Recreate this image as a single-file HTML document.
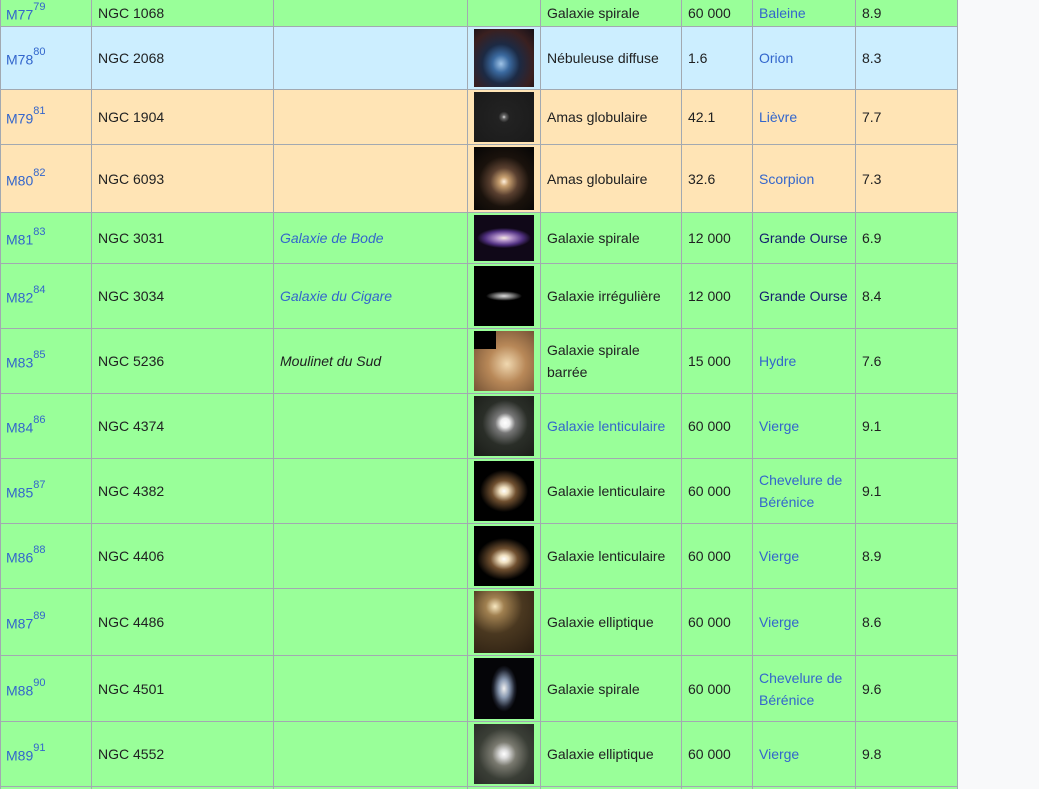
<!DOCTYPE html>
<html><head><meta charset="utf-8"><style>
html,body{margin:0;width:1039px;height:789px;overflow:hidden}
body{background:#f8f9fa;font-family:"Liberation Sans",Arial,sans-serif;font-size:14px;color:#202122;position:relative}
.r{position:absolute;left:0;width:958px;box-sizing:border-box;border-bottom:1px solid #a2a9b1;border-left:1px solid #a2a9b1}
.g{background:#99ff99}.b{background:#cceeff}.o{background:#ffe4b5}
.c{position:absolute;top:0;bottom:0;box-sizing:border-box;border-right:1px solid #a2a9b1;padding:0 6px;display:flex;align-items:center;line-height:22px}
.c1{left:-1px;width:92px}.c2{left:91px;width:182px}.c3{left:273px;width:194px}.c4{left:467px;width:73px}.c5{left:540px;width:141px}.c6{left:681px;width:71px}.c7{left:752px;width:103px}.c8{left:855px;width:102px}
a{color:#3366cc;text-decoration:none}
sup{font-size:11px;position:relative;top:-4px}
i{font-style:italic}
.im{position:absolute;left:6px;width:60px;top:2px;bottom:2px}
.dk{color:#14206e}
</style></head><body>

<div class="r g" style="top:0px;height:27px"><div class="c c1"><a>M77<sup>79</sup></a></div><div class="c c2">NGC 1068</div><div class="c c3"></div><div class="c c4"></div><div class="c c5">Galaxie spirale</div><div class="c c6">60 000</div><div class="c c7"><a>Baleine</a></div><div class="c c8">8.9</div></div>

<div class="r b" style="top:27px;height:63px"><div class="c c1"><a>M78<sup>80</sup></a></div><div class="c c2">NGC 2068</div><div class="c c3"></div><div class="c c4"><div class="im" style="background:radial-gradient(ellipse at 45% 60%,#9fc4e8 0,#3b6aa0 18%,#1c2a44 40%,#3a2020 70%,#141018 100%)"></div></div><div class="c c5">Nébuleuse diffuse</div><div class="c c6">1.6</div><div class="c c7"><a>Orion</a></div><div class="c c8">8.3</div></div>

<div class="r o" style="top:90px;height:55px"><div class="c c1"><a>M79<sup>81</sup></a></div><div class="c c2">NGC 1904</div><div class="c c3"></div><div class="c c4"><div class="im" style="background:radial-gradient(circle at 50% 50%,#ddd 0,#666 5%,#222 14%,#1a1a1a 100%)"></div></div><div class="c c5">Amas globulaire</div><div class="c c6">42.1</div><div class="c c7"><a>Lièvre</a></div><div class="c c8">7.7</div></div>

<div class="r o" style="top:145px;height:68px"><div class="c c1"><a>M80<sup>82</sup></a></div><div class="c c2">NGC 6093</div><div class="c c3"></div><div class="c c4"><div class="im" style="background:radial-gradient(circle at 50% 55%,#fff0dd 0,#c8a070 10%,#5a4030 30%,#1a120c 55%,#050505 100%)"></div></div><div class="c c5">Amas globulaire</div><div class="c c6">32.6</div><div class="c c7"><a>Scorpion</a></div><div class="c c8">7.3</div></div>

<div class="r g" style="top:213px;height:51px"><div class="c c1"><a>M81<sup>83</sup></a></div><div class="c c2">NGC 3031</div><div class="c c3"><a><i>Galaxie de Bode</i></a></div><div class="c c4"><div class="im" style="background:radial-gradient(ellipse 45% 22% at 50% 50%,#f4e8e0 0,#b090c8 30%,#503080 70%,#100818 100%),#0a0610"></div></div><div class="c c5">Galaxie spirale</div><div class="c c6">12 000</div><div class="c c7"><span class="dk">Grande Ourse</span></div><div class="c c8">6.9</div></div>

<div class="r g" style="top:264px;height:65px"><div class="c c1"><a>M82<sup>84</sup></a></div><div class="c c2">NGC 3034</div><div class="c c3"><a><i>Galaxie du Cigare</i></a></div><div class="c c4"><div class="im" style="background:radial-gradient(ellipse 30% 8% at 50% 50%,#ddd 0,#777 50%,#000 100%),#000"></div></div><div class="c c5">Galaxie irrégulière</div><div class="c c6">12 000</div><div class="c c7"><span class="dk">Grande Ourse</span></div><div class="c c8">8.4</div></div>

<div class="r g" style="top:329px;height:65px"><div class="c c1"><a>M83<sup>85</sup></a></div><div class="c c2">NGC 5236</div><div class="c c3"><i>Moulinet du Sud</i></div><div class="c c4"><div class="im" style="background:radial-gradient(circle at 55% 55%,#f0d8b0 0,#b88858 40%,#6a4a30 100%)"><div style="position:absolute;left:0;top:0;width:22px;height:18px;background:#000"></div></div></div><div class="c c5">Galaxie spirale barrée</div><div class="c c6">15 000</div><div class="c c7"><a>Hydre</a></div><div class="c c8">7.6</div></div>

<div class="r g" style="top:394px;height:65px"><div class="c c1"><a>M84<sup>86</sup></a></div><div class="c c2">NGC 4374</div><div class="c c3"></div><div class="c c4"><div class="im" style="background:radial-gradient(circle at 52% 45%,#fff 0,#eee 10%,#777 22%,#2a2e28 50%,#1a1c18 100%)"></div></div><div class="c c5"><a>Galaxie lenticulaire</a></div><div class="c c6">60 000</div><div class="c c7"><a>Vierge</a></div><div class="c c8">9.1</div></div>

<div class="r g" style="top:459px;height:65px"><div class="c c1"><a>M85<sup>87</sup></a></div><div class="c c2">NGC 4382</div><div class="c c3"></div><div class="c c4"><div class="im" style="background:radial-gradient(ellipse 40% 35% at 50% 50%,#fff 0,#f0e0c0 18%,#705030 50%,#000 100%),#000"></div></div><div class="c c5">Galaxie lenticulaire</div><div class="c c6">60 000</div><div class="c c7"><a>Chevelure de Bérénice</a></div><div class="c c8">9.1</div></div>

<div class="r g" style="top:524px;height:65px"><div class="c c1"><a>M86<sup>88</sup></a></div><div class="c c2">NGC 4406</div><div class="c c3"></div><div class="c c4"><div class="im" style="background:radial-gradient(ellipse 45% 35% at 50% 55%,#fff 0,#f0e0c0 18%,#705030 50%,#000 100%),#000"></div></div><div class="c c5">Galaxie lenticulaire</div><div class="c c6">60 000</div><div class="c c7"><a>Vierge</a></div><div class="c c8">8.9</div></div>

<div class="r g" style="top:589px;height:67px"><div class="c c1"><a>M87<sup>89</sup></a></div><div class="c c2">NGC 4486</div><div class="c c3"></div><div class="c c4"><div class="im" style="background:radial-gradient(circle at 35% 25%,#f8e8c0 0,#a08050 15%,#4a3820 45%,#281c10 100%)"></div></div><div class="c c5">Galaxie elliptique</div><div class="c c6">60 000</div><div class="c c7"><a>Vierge</a></div><div class="c c8">8.6</div></div>

<div class="r g" style="top:656px;height:66px"><div class="c c1"><a>M88<sup>90</sup></a></div><div class="c c2">NGC 4501</div><div class="c c3"></div><div class="c c4"><div class="im" style="background:radial-gradient(ellipse 22% 38% at 50% 50%,#f0f0f0 0,#8898b0 40%,#202430 80%,#050508 100%),#050508"></div></div><div class="c c5">Galaxie spirale</div><div class="c c6">60 000</div><div class="c c7"><a>Chevelure de Bérénice</a></div><div class="c c8">9.6</div></div>

<div class="r g" style="top:722px;height:65px"><div class="c c1"><a>M89<sup>91</sup></a></div><div class="c c2">NGC 4552</div><div class="c c3"></div><div class="c c4"><div class="im" style="background:radial-gradient(circle at 50% 50%,#fff 0,#ddd 10%,#7a7a70 28%,#3a3e36 60%,#2a2c28 100%)"></div></div><div class="c c5">Galaxie elliptique</div><div class="c c6">60 000</div><div class="c c7"><a>Vierge</a></div><div class="c c8">9.8</div></div>

<div class="r g" style="top:787px;height:2px;border-bottom:none"><div class="c c1"></div><div class="c c2"></div><div class="c c3"></div><div class="c c4"></div><div class="c c5"></div><div class="c c6"></div><div class="c c7"></div><div class="c c8"></div></div>
</body></html>
